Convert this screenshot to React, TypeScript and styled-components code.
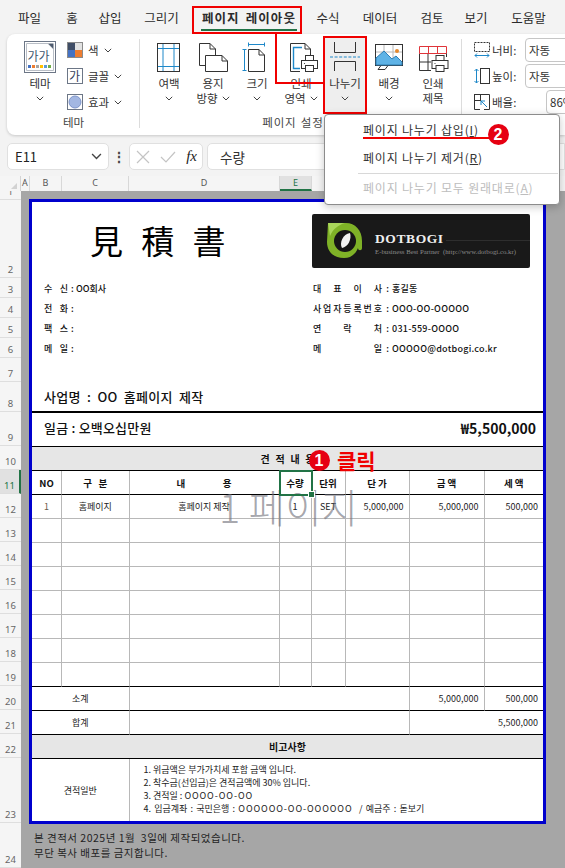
import styled, { createGlobalStyle } from "styled-components";

const KR = `"Noto Sans CJK KR", "Noto Sans", sans-serif`;

const GlobalStyle = createGlobalStyle`
  html, body { margin: 0; padding: 0; background: #f3f3f3; }
  * { box-sizing: border-box; }
  body { font-family: ${KR}; color: #222; }
`;

const tabs = [
  { label: "파일", w: 43 },
  { label: "홈", w: 42 },
  { label: "삽입", w: 34 },
  { label: "그리기", w: 69 },
  { label: "페이지 레이아웃", w: 106, active: true },
  { label: "수식", w: 52 },
  { label: "데이터", w: 52 },
  { label: "검토", w: 52 },
  { label: "보기", w: 36 },
  { label: "도움말", w: 69 },
];

const rowHeights: [number, number][] = [
  [1, 9], [2, 78], [3, 20], [4, 20], [5, 20], [6, 20], [7, 24], [8, 30], [9, 34],
  [10, 24], [11, 24], [12, 24], [13, 24], [14, 24], [15, 24], [16, 24], [17, 24],
  [18, 24], [19, 24], [20, 24], [21, 24], [22, 24], [23, 65], [24, 45],
];

const columns: [string, number][] = [
  ["A", 9], ["B", 32], ["C", 67], ["D", 151], ["E", 32], ["F", 34], ["G", 64], ["H", 75], ["I", 60],
];

const emptyRows = [13, 14, 15, 16, 17, 18, 19];

const Chevron = ({ w = 8 }: { w?: number }) => (
  <svg width={w} height={(w * 5) / 8} viewBox="0 0 8 5" fill="none">
    <path d="M0.8 0.8 L4 4 L7.2 0.8" stroke="#444" strokeWidth="1" />
  </svg>
);

const ThemeIcon = () => (
  <svg width="32" height="32" viewBox="0 0 32 32">
    <rect x="0.5" y="0.5" width="31" height="31" fill="#fff" stroke="#6c7686" strokeWidth="1" />
    <path d="M2.5 2.5 H24 L29.5 8 V29.5 H2.5Z" fill="#fff" stroke="#b9bec6" />
    <path d="M24 2.5 L29.5 8 V2.5Z" fill="#4d5a6e" />
    <text x="3.5" y="20" fontSize="12" fill="#41566e" fontFamily={KR}>가가</text>
    {["#4472c4", "#ed7d31", "#a5a5a5", "#ffc000", "#5b9bd5", "#70ad47"].map((c, i) => (
      <rect key={c} x={4 + i * 4} y="24" width="3" height="3" fill={c} />
    ))}
  </svg>
);

const ColorsIcon = () => (
  <svg width="16" height="16" viewBox="0 0 16 16">
    <rect width="16" height="16" fill="#8a8a8a" />
    <rect x="1" y="1" width="7" height="7" fill="#3f4d66" />
    <rect x="8" y="1" width="7" height="7" fill="#e2e2e2" />
    <rect x="1" y="8" width="7" height="7" fill="#4472c4" />
    <rect x="8" y="8" width="7" height="7" fill="#ed7d31" />
  </svg>
);

const FontsIcon = () => (
  <svg width="16" height="16" viewBox="0 0 16 16">
    <rect x="0.5" y="0.5" width="15" height="15" fill="#fff" stroke="#6c7686" />
    <text x="2" y="13" fontSize="12" fill="#34405a" fontFamily={KR}>가</text>
  </svg>
);

const EffectsIcon = () => (
  <svg width="16" height="16" viewBox="0 0 16 16">
    <rect x="0.5" y="0.5" width="15" height="15" fill="#fff" stroke="#6c7686" />
    <circle cx="8" cy="8" r="6" fill="#a3b7e2" stroke="#7c93c9" />
  </svg>
);

const page = "#333";
const blue = "#1e88c9";

const MarginsIcon = () => (
  <svg width="32" height="32" viewBox="0 0 32 32" fill="none">
    <path d="M10 2 V30 M21 2 V30 M4 7.5 H26 M4 25.5 H26" stroke={blue} />
    <rect x="4.5" y="2.5" width="22" height="28" stroke={page} />
  </svg>
);

const OrientationIcon = () => (
  <svg width="32" height="32" viewBox="0 0 32 32" fill="none" stroke={page}>
    <path d="M8 24.5 H2.5 V2.5 H13 L18.5 8 V14" />
    <path d="M13 2.5 V8 H18.5" />
    <path d="M8.5 14.5 H25 L30.5 20 V30.5 H8.5Z" />
    <path d="M25 14.5 V20 H30.5" />
  </svg>
);

const SizeIcon = () => (
  <svg width="32" height="32" viewBox="0 0 32 32" fill="none">
    <path d="M7.5 8.5 H18 L23.5 14 V30.5 H7.5Z M18 8.5 V14 H23.5" stroke={page} />
    <path d="M7 3.5 H24 M7.5 1.5 V5.5 M23.5 1.5 V5.5 M3.5 8 V30 M1.5 8.5 H5.5 M1.5 29.5 H5.5" stroke={blue} />
  </svg>
);

const PrinterGlyph = ({ x, y }: { x: number; y: number }) => (
  <g transform={`translate(${x} ${y})`} fill="#fff" stroke={page}>
    <rect x="4.5" y="0.5" width="8" height="6" />
    <rect x="0.5" y="5.5" width="16" height="8" />
    <rect x="4.5" y="10.5" width="8" height="6" />
    <circle cx="3.5" cy="8.5" r="0.6" fill={page} stroke="none" />
  </g>
);

const PrintAreaIcon = () => (
  <svg width="32" height="32" viewBox="0 0 32 32" fill="none" style={{ overflow: "visible" }}>
    <path d="M15 30.5 H5.5 V2.5 H20 L25.5 8 V14 M20 2.5 V8 H25.5" stroke={page} />
    <path d="M17 6.5 H8.5 V27.5 H15" stroke={blue} strokeWidth="1.4" />
    <PrinterGlyph x={16} y={14} />
  </svg>
);

const BreaksIcon = () => (
  <svg width="32" height="32" viewBox="0 0 32 32" fill="none">
    <path d="M5.5 1 V11.5 H26.5 V1 M5.5 30 V20.5 H26.5 V30" stroke={page} />
    <path d="M1 16 H31" stroke={blue} strokeDasharray="3 1.6" />
  </svg>
);

const BackgroundIcon = () => (
  <svg width="32" height="32" viewBox="0 0 32 32" fill="none">
    <path d="M8 24.5 L5 28.5 H12 L15 24.5" fill="#fff" stroke={page} />
    <rect x="2.5" y="3.5" width="27" height="21" fill="#fff" stroke={page} />
    <path d="M3 11 H29 M11 4 V11 M20 4 V24" stroke="#b8b8b8" />
    <path d="M3 24 V17 L11 10 L19 18 L23 15 L29 21 V24Z" fill="#5fb3e6" stroke="#2f7fb5" />
    <circle cx="24" cy="10" r="2" fill="#e6892e" />
  </svg>
);

const TitlesIcon = () => (
  <svg width="32" height="32" viewBox="0 0 32 32" fill="none">
    <path d="M2.5 12.5 V29.5 H14 M2.5 21 H14 M11 12 V29" stroke={page} />
    <path d="M2.5 5.5 H29.5 V12.5 H2.5Z M11.5 5.5 V12.5 M20.5 5.5 V12.5" stroke="#e0353a" />
    <path d="M29.5 12.5 V16" stroke={page} />
    <PrinterGlyph x={14.5} y={14} />
  </svg>
);

const WidthIcon = () => (
  <svg width="18" height="18" viewBox="0 0 18 18" fill="none">
    <rect x="1.5" y="1.5" width="15" height="9" stroke={page} strokeDasharray="2 1" />
    <path d="M2 14.5 H16 M4 12.5 L2 14.5 L4 16.5 M14 12.5 L16 14.5 L14 16.5" stroke={blue} />
  </svg>
);

const HeightIcon = () => (
  <svg width="18" height="18" viewBox="0 0 18 18" fill="none">
    <rect x="7.5" y="1.5" width="9" height="15" stroke={page} />
    <path d="M3.5 2 V16 M1.5 4 L3.5 2 L5.5 4 M1.5 14 L3.5 16 L5.5 14" stroke={blue} />
  </svg>
);

const ScaleIcon = () => (
  <svg width="18" height="18" viewBox="0 0 18 18" fill="none">
    <path d="M1.5 16.5 V1.5 H16.5 V16.5 H11 M1.5 16.5 H7" stroke={page} />
    <rect x="1.5" y="1.5" width="6" height="6" stroke={page} />
    <path d="M14 14 L8 8 M8 12 V8 H12" stroke={blue} />
  </svg>
);

const LogoMark = () => (
  <svg width="38" height="38" viewBox="0 0 38 38" fill="none">
    <path d="M27 6 A14 14 0 0 1 33 18" stroke="#777" strokeWidth="3" />
    <path d="M2 1 H20 C29 1 36 8 36 19 V26 C36 29 32 29 32 26 C30 31 26 36 18 36 C8 36 1 30 1 20 Z" fill="#7fb227" />
    <path d="M2 1 H19 C12 3 7 7 4 14 Z" fill="#a9d65a" />
    <circle cx="19" cy="19" r="11" fill="#161616" />
    <path d="M24 11 C26 17 22 25 16 26 C13 21 17 12 24 11Z" fill="#f2f2f2" />
  </svg>
);

const FxIcon = styled.span`
  font-family: "Liberation Serif", serif;
  font-style: italic;
  font-size: 15px;
  color: #222;
`;

const Spread = ({ text, w }: { text: string; w: number }) => (
  <SpreadBox style={{ width: w }}>
    {text.split("").map((c, i) => (
      <span key={i}>{c}</span>
    ))}
  </SpreadBox>
);

const BigButton = ({
  icon,
  lines,
  chevronLine,
  $hot,
}: {
  icon: React.ReactNode;
  lines: string[];
  chevronLine?: boolean;
  $hot?: boolean;
}) => (
  <BigBtn $hot={$hot}>
    <BigIcon>{icon}</BigIcon>
    {lines.map((l, i) => (
      <BigLabel key={l}>
        {l}
        {chevronLine && i === lines.length - 1 && (
          <InlineChevron>
            <Chevron />
          </InlineChevron>
        )}
      </BigLabel>
    ))}
    {!chevronLine && lines.length === 1 && (
      <BigLabel>
        <Chevron />
      </BigLabel>
    )}
  </BigBtn>
);

export default function App() {
  return (
    <Screen>
      <GlobalStyle />
      <MenuBar>
        {tabs.map((t) => (
          <Tab key={t.label} $w={t.w} $active={t.active}>
            {t.label}
          </Tab>
        ))}
      </MenuBar>

      <Ribbon>
        <ThemeGroup>
          <ThemeBody>
            <ThemeBtn>
              <ThemeIcon />
              <BigLabel>테마</BigLabel>
              <BigLabel>
                <Chevron />
              </BigLabel>
            </ThemeBtn>
            <SmallColumn>
              <SmallBtn>
                <ColorsIcon />색 <Chevron />
              </SmallBtn>
              <SmallBtn>
                <FontsIcon />글꼴 <Chevron />
              </SmallBtn>
              <SmallBtn>
                <EffectsIcon />효과 <Chevron />
              </SmallBtn>
            </SmallColumn>
          </ThemeBody>
          <GroupTitle>테마</GroupTitle>
        </ThemeGroup>

        <PageGroup>
          <PageBody>
            <BigButton icon={<MarginsIcon />} lines={["여백"]} />
            <BigButton icon={<OrientationIcon />} lines={["용지", "방향"]} chevronLine />
            <BigButton icon={<SizeIcon />} lines={["크기"]} />
            <BigButton icon={<PrintAreaIcon />} lines={["인쇄", "영역"]} chevronLine />
            <BigButton icon={<BreaksIcon />} lines={["나누기"]} $hot />
            <BigButton icon={<BackgroundIcon />} lines={["배경"]} />
            <BigButton icon={<TitlesIcon />} lines={["인쇄", "제목"]} />
          </PageBody>
          <PageTitle>페이지 설정</PageTitle>
        </PageGroup>

        <ScaleGroup>
          <ScaleRow>
            <WidthIcon />
            <ScaleLabel>너비:</ScaleLabel>
            <ScaleInput>자동</ScaleInput>
          </ScaleRow>
          <ScaleRow>
            <HeightIcon />
            <ScaleLabel>높이:</ScaleLabel>
            <ScaleInput>자동</ScaleInput>
          </ScaleRow>
          <ScaleRow>
            <ScaleIcon />
            <ScaleLabel>배율:</ScaleLabel>
            <ScaleInput $narrow>86%</ScaleInput>
          </ScaleRow>
        </ScaleGroup>
      </Ribbon>

      <FormulaBar>
        <NameBox>
          E11
          <Chevron w={11} />
        </NameBox>
        <Dots>⋮</Dots>
        <FxBox>
          <svg width="14" height="14" viewBox="0 0 14 14" fill="none" stroke="#c4c4c4" strokeWidth="1.2">
            <path d="M1 1 L13 13 M13 1 L1 13" />
          </svg>
          <svg width="16" height="14" viewBox="0 0 16 14" fill="none" stroke="#c4c4c4" strokeWidth="1.2">
            <path d="M1 7 L6 12 L15 2" />
          </svg>
          <FxIcon>fx</FxIcon>
        </FxBox>
        <FormulaInput>수량</FormulaInput>
      </FormulaBar>

      <ColumnHeader>
        <Corner />
        {columns.map(([c, w]) => (
          <ColumnCell key={c} $w={w} $active={c === "E"}>
            {c}
          </ColumnCell>
        ))}
      </ColumnHeader>

      <SheetArea>
        <RowHeader>
          {rowHeights.map(([n, h]) => (
            <RowCell key={n} $h={h} $active={n === 11}>
              {n}
            </RowCell>
          ))}
        </RowHeader>

        <Canvas>
          <Sheet>
            <TopSection>
              <TopLeft>
                <Title>見 積 書</Title>
                <InfoRow>
                  <Spread text="수신" w={24} />
                  <Colon>:</Colon>
                  <span>OO회사</span>
                </InfoRow>
                <InfoRow>
                  <Spread text="전화" w={24} />
                  <Colon>:</Colon>
                </InfoRow>
                <InfoRow>
                  <Spread text="팩스" w={24} />
                  <Colon>:</Colon>
                </InfoRow>
                <InfoRow>
                  <Spread text="메일" w={24} />
                  <Colon>:</Colon>
                </InfoRow>
              </TopLeft>
              <TopRight>
                <LogoBox>
                  <LogoMark />
                  <LogoText>
                    <LogoName>DOTBOGI</LogoName>
                    <LogoSub>
                      E-business Best Partner&nbsp;&nbsp;(http://www.dotbogi.co.kr)
                    </LogoSub>
                  </LogoText>
                </LogoBox>
                <InfoRow>
                  <Spread text="대표이사" w={69} />
                  <RightColon>:</RightColon>
                  <InfoValue>홍길동</InfoValue>
                </InfoRow>
                <InfoRow>
                  <Spread text="사업자등록번호" w={69} />
                  <RightColon>:</RightColon>
                  <InfoValue>OOO-OO-OOOOO</InfoValue>
                </InfoRow>
                <InfoRow>
                  <Spread text="연락처" w={69} />
                  <RightColon>:</RightColon>
                  <InfoValue>031-559-OOOO</InfoValue>
                </InfoRow>
                <InfoRow>
                  <Spread text="메일" w={69} />
                  <RightColon>:</RightColon>
                  <InfoValue>OOOOO@dotbogi.co.kr</InfoValue>
                </InfoRow>
              </TopRight>
            </TopSection>

            <ProjectRow>사업명 : OO 홈페이지 제작</ProjectRow>
            <AmountRow>
              <span>일금 : 오백오십만원</span>
              <AmountValue>₩5,500,000</AmountValue>
            </AmountRow>

            <Table>
              <Banner $span={8}>견 적 내 용</Banner>

              <HeadCell>NO</HeadCell>
              <HeadCell>구 &nbsp; 분</HeadCell>
              <HeadCell>내 &emsp;&emsp;&emsp;&ensp; 용</HeadCell>
              <HeadCell $selected>수량</HeadCell>
              <HeadCell>단위</HeadCell>
              <HeadCell>단 가</HeadCell>
              <HeadCell>금 액</HeadCell>
              <HeadCell $last>세 액</HeadCell>

              <Cell $tone="#6b5a4a">1</Cell>
              <Cell>홈페이지</Cell>
              <Cell>홈페이지 제작</Cell>
              <Cell>1</Cell>
              <Cell>SET</Cell>
              <Cell $right>5,000,000</Cell>
              <Cell $right>5,000,000</Cell>
              <Cell $right $last>500,000</Cell>

              {emptyRows.map((r) => (
                <EmptyRow key={r}>
                  <Cell $heavy={r === 19} />
                  <Cell $heavy={r === 19} />
                  <Cell $heavy={r === 19} />
                  <Cell $heavy={r === 19} />
                  <Cell $heavy={r === 19} />
                  <Cell $heavy={r === 19} />
                  <Cell $heavy={r === 19} />
                  <Cell $heavy={r === 19} $last />
                </EmptyRow>
              ))}

              <Cell $span={2} $heavy>소계</Cell>
              <Cell $span={4} $heavy />
              <Cell $right $heavy>5,000,000</Cell>
              <Cell $right $heavy $last>500,000</Cell>

              <Cell $span={2} $heavy>합계</Cell>
              <Cell $span={4} $heavy />
              <Cell $span={2} $right $heavy $last>5,500,000</Cell>

              <Banner $span={8}>비고사항</Banner>

              <NoteLabel>견적일반</NoteLabel>
              <NoteBody>
                <div>1. 위금액은 부가가치세 포함 금액 입니다.</div>
                <div>2. 착수금(선입금)은 견적금액에 30% 입니다.</div>
                <div>3. 견적일 : <WideDigits>OOOO-OO-OO</WideDigits></div>
                <AccountLine>
                  4. 입금계좌 : 국민은행 : <WideDigits>OOOOOO-OO-OOOOOO</WideDigits> &nbsp;/ 예금주 : 돋보기
                </AccountLine>
              </NoteBody>
            </Table>
          </Sheet>
          <Footer>
            <div>본 견적서 2025년 1월 &nbsp;3일에 제작되었습니다.</div>
            <div>무단 복사 배포를 금지합니다.</div>
          </Footer>
        </Canvas>
      </SheetArea>

      <Watermark>1 페이지</Watermark>

      <TabHighlight />
      <ButtonHighlight />
      <ConnectorDown />
      <ConnectorAcross />

      <DropMenu>
        <MenuItem>페이지 나누기 삽입(<u>I</u>)</MenuItem>
        <MenuItem>페이지 나누기 제거(<u>R</u>)</MenuItem>
        <MenuDivider />
        <MenuItem $disabled>페이지 나누기 모두 원래대로(<u>A</u>)</MenuItem>
      </DropMenu>
      <MenuUnderline />
      <StepBadge $x={498} $y={134}>2</StepBadge>

      <StepBadge $x={319} $y={460}>1</StepBadge>
      <ClickNote>클릭</ClickNote>
    </Screen>
  );
}

const Screen = styled.div`
  position: relative;
  width: 565px;
  height: 868px;
  overflow: hidden;
  background: #f3f3f3;
`;

const MenuBar = styled.div`
  display: flex;
  align-items: center;
  height: 34px;
  padding: 2px 0 0 8px;
`;

const Tab = styled.div<{ $w: number; $active?: boolean }>`
  position: relative;
  flex: none;
  width: ${({ $w }) => $w}px;
  font-size: 12.5px;
  line-height: 18px;
  white-space: nowrap;
  text-align: center;
  color: #2b2b2b;
  font-weight: ${({ $active }) => ($active ? 700 : 400)};
  letter-spacing: ${({ $active }) => ($active ? "1.1px" : "0")};
  word-spacing: ${({ $active }) => ($active ? "2px" : "0")};
  &::after {
    content: "";
    display: ${({ $active }) => ($active ? "block" : "none")};
    position: absolute;
    left: 5px;
    right: 5px;
    bottom: -4px;
    height: 2px;
    background: #217346;
  }
`;

const Ribbon = styled.div`
  display: flex;
  height: 101px;
  margin-left: 7px;
  background: #fff;
  border-radius: 8px 0 0 8px;
  box-shadow: 0 1px 3px rgba(0, 0, 0, 0.18);
`;

const ThemeGroup = styled.div`
  display: flex;
  flex-direction: column;
  flex: none;
  width: 133px;
  padding-top: 7px;
  position: relative;
  &::after {
    content: "";
    position: absolute;
    right: 0;
    top: 5px;
    bottom: 7px;
    width: 1px;
    background: #dcdcdc;
  }
`;

const ThemeBody = styled.div`
  display: flex;
  flex: 1;
  padding-left: 17px;
  gap: 11px;
`;

const ThemeBtn = styled.div`
  display: flex;
  flex-direction: column;
  align-items: center;
  width: 32px;
  & > svg:first-child {
    margin-bottom: 3px;
  }
`;

const SmallColumn = styled.div`
  display: flex;
  flex-direction: column;
  gap: 10px;
  padding-top: 1px;
`;

const SmallBtn = styled.div`
  display: flex;
  align-items: center;
  gap: 5px;
  height: 16px;
  font-size: 11.5px;
  white-space: nowrap;
  color: #333;
`;

const GroupTitle = styled.div`
  height: 20px;
  font-size: 11.5px;
  line-height: 15px;
  text-align: center;
  color: #444;
`;

const PageTitle = styled(GroupTitle)`
  padding-right: 16px;
  letter-spacing: 0.8px;
  word-spacing: 1px;
`;

const PageGroup = styled.div`
  display: flex;
  flex-direction: column;
  flex: none;
  width: 322px;
  padding-top: 3px;
  position: relative;
  &::after {
    content: "";
    position: absolute;
    right: 0;
    top: 5px;
    bottom: 7px;
    width: 1px;
    background: #dcdcdc;
  }
`;

const PageBody = styled.div`
  display: flex;
  flex: 1;
  padding-left: 7px;
`;

const BigBtn = styled.div<{ $hot?: boolean }>`
  display: flex;
  flex-direction: column;
  align-items: center;
  flex: none;
  width: 44px;
  height: 76px;
  background: ${({ $hot }) => ($hot ? "#eeeeee" : "transparent")};
`;

const BigIcon = styled.div`
  display: flex;
  justify-content: center;
  height: 39px;
  padding-top: 4px;
`;

const BigLabel = styled.div`
  display: flex;
  align-items: center;
  justify-content: center;
  height: 15px;
  font-size: 11.5px;
  line-height: 15px;
  white-space: nowrap;
  color: #333;
`;

const InlineChevron = styled.span`
  display: inline-flex;
  margin-left: 4px;
`;

const ScaleGroup = styled.div`
  display: flex;
  flex-direction: column;
  flex: none;
  padding: 3px 0 0 11px;
`;

const ScaleRow = styled.div`
  display: flex;
  align-items: center;
  gap: 1px;
  height: 26px;
  font-size: 11.5px;
  color: #333;
`;

const ScaleLabel = styled.span`
  width: 32px;
  flex: none;
`;

const ScaleInput = styled.div<{ $narrow?: boolean }>`
  flex: none;
  width: 60px;
  height: 24px;
  margin-left: ${({ $narrow }) => ($narrow ? "21px" : "0")};
  padding: 1px 3px;
  line-height: 20px;
  border: 1px solid #c6c6c6;
  border-radius: 4px;
  background: #fff;
`;

const FormulaBar = styled.div`
  display: flex;
  align-items: stretch;
  height: 27px;
  margin-top: 8px;
  padding-left: 7px;
`;

const fieldBox = `
  display: flex;
  align-items: center;
  background: #fff;
  border: 1px solid #e0e0e0;
  border-radius: 5px;
`;

const NameBox = styled.div`
  ${fieldBox}
  justify-content: space-between;
  width: 102px;
  padding: 0 6px 0 7px;
  font-size: 13px;
  color: #222;
`;

const Dots = styled.div`
  width: 20px;
  text-align: center;
  font-size: 14px;
  font-weight: 700;
  line-height: 27px;
  color: #444;
`;

const FxBox = styled.div`
  ${fieldBox}
  justify-content: space-between;
  width: 74px;
  padding: 0 5px 0 6px;
`;

const FormulaInput = styled.div`
  ${fieldBox}
  flex: 1;
  margin-left: 4px;
  padding-left: 12px;
  font-size: 13.5px;
  border-radius: 5px 0 0 5px;
  color: #333;
`;

const ColumnHeader = styled.div`
  display: flex;
  height: 15px;
  margin-top: 6px;
  background: #f5f5f5;
`;

const Corner = styled.div`
  position: relative;
  flex: none;
  width: 21px;
  border-right: 1px solid #d4d4d4;
  &::after {
    content: "";
    position: absolute;
    right: 3px;
    bottom: 2px;
    border-style: solid;
    border-width: 0 0 6px 6px;
    border-color: transparent transparent #d2d2d2 transparent;
  }
`;

const ColumnCell = styled.div<{ $w: number; $active?: boolean }>`
  flex: none;
  width: ${({ $w }) => $w}px;
  text-align: center;
  font-size: 9px;
  line-height: 14px;
  color: ${({ $active }) => ($active ? "#217346" : "#555")};
  background: ${({ $active }) => ($active ? "#e1e1e1" : "transparent")};
  border-right: 1px solid #d8d8d8;
  border-bottom: ${({ $active }) => ($active ? "2px solid #217346" : "0")};
  font-family: "Noto Sans", sans-serif;
`;

const SheetArea = styled.div`
  display: flex;
  height: 677px;
  overflow: hidden;
`;

const RowHeader = styled.div`
  flex: none;
  width: 21px;
  background: #f5f5f5;
`;

const RowCell = styled.div<{ $h: number; $active?: boolean }>`
  display: flex;
  align-items: flex-end;
  justify-content: center;
  height: ${({ $h }) => $h}px;
  overflow: hidden;
  padding-bottom: 1px;
  font-family: "Noto Sans", sans-serif;
  font-size: 9.5px;
  line-height: 12px;
  color: ${({ $active }) => ($active ? "#217346" : "#666")};
  background: ${({ $active }) => ($active ? "#e1e1e1" : "transparent")};
  border-bottom: 1px solid #dedede;
  border-right: ${({ $active }) => ($active ? "2px solid #217346" : "0")};
`;

const Canvas = styled.div`
  flex: 1;
  padding: 8px 0 0 8px;
  background: #a6a6a6;
`;

const Sheet = styled.div`
  width: 517px;
  height: 625px;
  border: 3px solid #0000cd;
  background: #fff;
  display: flex;
  flex-direction: column;
`;

const TopSection = styled.div`
  display: flex;
  flex: none;
  height: 156px;
  font-size: 9px;
  color: #111;
`;

const TopLeft = styled.div`
  flex: none;
  width: 280px;
`;

const TopRight = styled.div`
  flex: 1;
`;

const Title = styled.div`
  height: 76px;
  padding: 15px 0 0 58px;
  font-family: "Liberation Serif", "Noto Sans CJK KR", serif;
  font-size: 33px;
  line-height: 52px;
  letter-spacing: 5px;
  color: #000;
  white-space: nowrap;
`;

const InfoRow = styled.div`
  display: flex;
  align-items: center;
  height: 20px;
  padding-left: 12px;
  font-weight: 500;
  white-space: nowrap;
  ${TopRight} & {
    padding-left: 1px;
  }
`;

const InfoValue = styled.span`
  letter-spacing: 0.25px;
`;

const SpreadBox = styled.div`
  display: flex;
  justify-content: space-between;
  flex: none;
`;

const Colon = styled.span`
  width: 8px;
  padding-left: 3px;
  flex: none;
`;

const RightColon = styled.span`
  width: 11px;
  margin-right: -1px;
  flex: none;
  text-align: center;
`;

const LogoBox = styled.div`
  display: flex;
  align-items: center;
  gap: 11px;
  width: 218px;
  height: 54px;
  margin: 12px 0 10px;
  padding: 0 0 0 14px;
  background: #191919;
  border-radius: 2px;
`;

const LogoText = styled.div`
  display: flex;
  flex-direction: column;
  flex: 1;
  padding-top: 8px;
  font-family: "Liberation Serif", serif;
  white-space: nowrap;
`;

const LogoName = styled.div`
  display: flex;
  align-items: center;
  font-size: 13.5px;
  line-height: 14px;
  font-variant: small-caps;
  font-weight: 700;
  letter-spacing: 0.6px;
  color: #eeeeee;
  &::after {
    content: "";
    flex: 1;
    height: 1px;
    margin: 3px 0 0 2px;
    background: #2e2e2e;
  }
`;

const LogoSub = styled.div`
  font-size: 6.8px;
  line-height: 12px;
  color: #8a8a8a;
`;

const ProjectRow = styled.div`
  display: flex;
  flex: none;
  align-items: flex-end;
  height: 55px;
  padding: 0 0 5px 12px;
  font-size: 13px;
  line-height: 18px;
  font-weight: 500;
  letter-spacing: 0.3px;
  word-spacing: 3px;
  color: #111;
  border-bottom: 2px solid #000;
`;

const AmountRow = styled.div`
  display: flex;
  flex: none;
  align-items: center;
  justify-content: space-between;
  height: 33px;
  padding: 0 7px 4px 12px;
  font-size: 13px;
  font-weight: 500;
  letter-spacing: 0.2px;
  color: #111;
`;

const AmountValue = styled.span`
  font-size: 14px;
  font-weight: 700;
  letter-spacing: 0;
`;

const Table = styled.div`
  display: grid;
  flex: none;
  grid-template-columns: 30px 67.5px 150px 32px 34px 64px 75px 58.5px;
  grid-template-rows: repeat(13, 24px) 62px;
  border-top: 1px solid #000;
`;

const EmptyRow = styled.div`
  display: contents;
`;

const Cell = styled.div<{
  $span?: number;
  $right?: boolean;
  $last?: boolean;
  $heavy?: boolean;
  $tone?: string;
}>`
  grid-column: span ${({ $span }) => $span ?? 1};
  display: flex;
  align-items: center;
  justify-content: ${({ $right }) => ($right ? "flex-end" : "center")};
  padding: 0 ${({ $right }) => ($right ? "5px" : "0")} 0 0;
  font-size: 9px;
  white-space: nowrap;
  color: ${({ $tone }) => $tone ?? "#222"};
  border-right: ${({ $last }) => ($last ? "0" : "1px solid #b8b8b8")};
  border-bottom: 1px solid ${({ $heavy }) => ($heavy ? "#000" : "#b8b8b8")};
`;

const Banner = styled.div<{ $span: number }>`
  grid-column: span ${({ $span }) => $span};
  display: flex;
  align-items: center;
  justify-content: center;
  font-size: 10px;
  font-weight: 700;
  word-spacing: 3.5px;
  color: #111;
  background: #e6e6e6;
  border-bottom: 1px solid #000;
`;

const HeadCell = styled.div<{ $selected?: boolean; $last?: boolean }>`
  position: relative;
  display: flex;
  align-items: center;
  justify-content: center;
  font-size: 9.5px;
  font-weight: 700;
  white-space: pre;
  color: #111;
  border-right: ${({ $last }) => ($last ? "0" : "1px solid #b8b8b8")};
  border-bottom: 1px solid #000;
  ${({ $selected }) =>
    $selected &&
    `
    z-index: 1;
    outline: 2px solid #217346;
    outline-offset: -1px;
    &::after {
      content: "";
      position: absolute;
      right: -3px;
      bottom: -3px;
      width: 5px;
      height: 5px;
      background: #217346;
      box-shadow: 0 0 0 1px #fff;
    }
  `}
`;

const NoteLabel = styled.div`
  grid-column: span 2;
  display: flex;
  align-items: center;
  justify-content: center;
  font-size: 9px;
  color: #222;
  border-right: 1px solid #b8b8b8;
`;

const NoteBody = styled.div`
  grid-column: span 6;
  padding: 4px 0 0 14px;
  font-size: 9px;
  line-height: 13px;
  white-space: nowrap;
  color: #222;
`;

const AccountLine = styled.div`
  word-spacing: 1.2px;
`;

const WideDigits = styled.span`
  letter-spacing: 0.9px;
`;

const Footer = styled.div`
  padding: 6px 0 0 5px;
  font-size: 10.5px;
  line-height: 15px;
  letter-spacing: 0.5px;
  color: #1f1f1f;
`;

const Watermark = styled.div`
  position: absolute;
  left: 219px;
  top: 480px;
  font-size: 39.5px;
  line-height: 52px;
  font-weight: 300;
  white-space: nowrap;
  color: rgba(110, 110, 120, 0.62);
  pointer-events: none;
`;

const TabHighlight = styled.div`
  position: absolute;
  left: 192px;
  top: 6px;
  width: 110px;
  height: 28px;
  border: 2px solid #f00000;
`;

const ButtonHighlight = styled.div`
  position: absolute;
  left: 323px;
  top: 36px;
  width: 44px;
  height: 78px;
  border: 2px solid #f00000;
`;

const ConnectorDown = styled.div`
  position: absolute;
  left: 275px;
  top: 34px;
  width: 2px;
  height: 50px;
  background: #f00000;
`;

const ConnectorAcross = styled.div`
  position: absolute;
  left: 275px;
  top: 82px;
  width: 49px;
  height: 2px;
  background: #f00000;
`;

const DropMenu = styled.div`
  position: absolute;
  left: 324px;
  top: 114px;
  width: 236px;
  height: 91px;
  padding: 1px 0 0 38px;
  background: #fff;
  border: 1px solid #8c8c8c;
  border-radius: 4px;
  box-shadow: 0 2px 8px rgba(0, 0, 0, 0.22);
`;

const MenuItem = styled.div<{ $disabled?: boolean }>`
  height: 28px;
  font-size: 12px;
  line-height: 28px;
  letter-spacing: 0.8px;
  white-space: nowrap;
  color: ${({ $disabled }) => ($disabled ? "#bdbdbd" : "#333")};
`;

const MenuDivider = styled.div`
  height: 1px;
  margin: 1px 1px 0 -5px;
  background: #d8d8d8;
`;

const MenuUnderline = styled.div`
  position: absolute;
  left: 363px;
  top: 137px;
  width: 128px;
  height: 2px;
  background: #f00000;
`;

const StepBadge = styled.div<{ $x: number; $y: number }>`
  position: absolute;
  left: ${({ $x }) => $x - 10.5}px;
  top: ${({ $y }) => $y - 10.5}px;
  width: 21px;
  height: 21px;
  border-radius: 50%;
  text-align: center;
  font-family: "Liberation Sans", sans-serif;
  font-size: 16px;
  font-weight: 700;
  line-height: 21px;
  color: #fff;
  background: #e60012;
`;

const ClickNote = styled.div`
  position: absolute;
  left: 337px;
  top: 446px;
  font-size: 21px;
  font-weight: 700;
  line-height: 28px;
  color: #f00000;
`;
